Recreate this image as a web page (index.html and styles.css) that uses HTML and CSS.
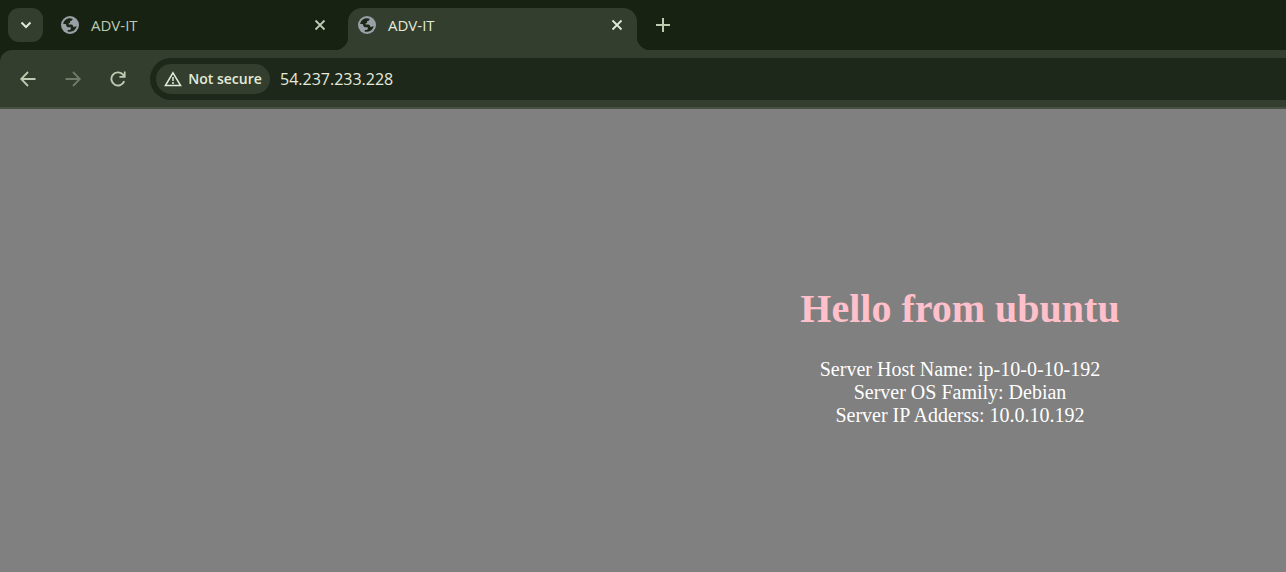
FILE: index.html
```html
<!DOCTYPE html>
<html lang="en">
<head>
<meta charset="utf-8">
<title>ADV-IT</title>
<link rel="stylesheet" href="styles.css">
</head>
<body>
<svg class="defs" aria-hidden="true">
  <symbol id="globe" viewBox="0 0 18 18">
    <circle cx="9" cy="9" r="9" fill="#9aa0a6"/>
    <path d="M2.200 8C2.600 4.700 5.400 2.200 8.800 2.200L11.600 2.700C11.600 4.200 10.600 4.900 9.200 5V6C9.200 6.900 8.600 7.300 7.600 7.300V8.400H10.200C11.500 8.400 12 9.200 12 10.200V10.800H14C15 10.800 15.400 10.400 15.800 9.600C15.300 13.200 12.500 15.800 9 15.800C8.200 15.800 7.400 15.700 6.700 15.400V13.900H8.400C9.400 13.900 9.800 13.300 9.800 12.500V11.300H7.600C6.300 11.300 5.500 10.500 5.300 9.200L4.600 8Z" fill="#1c2618"/>
  </symbol>
  <symbol id="close" viewBox="0 0 12 12">
    <path d="M1.500 1.500L10.500 10.500M10.500 1.500L1.500 10.500" fill="none" stroke="currentColor" stroke-width="1.800"/>
  </symbol>
</svg>
<div class="browser">
  <header class="tab-strip">
    <button class="tab-search" aria-label="Search tabs">
      <svg width="12" height="8" viewBox="0 0 12 8"><path d="M1.500 1.500L6 6L10.500 1.500" fill="none" stroke="currentColor" stroke-width="2"/></svg>
    </button>
    <div class="tab">
      <svg class="favicon"><use href="#globe"/></svg>
      <span class="tab-title">ADV-IT</span>
      <button class="tab-close" aria-label="Close tab"><svg width="12" height="12"><use href="#close"/></svg></button>
    </div>
    <div class="tab tab-active">
      <svg class="favicon"><use href="#globe"/></svg>
      <span class="tab-title">ADV-IT</span>
      <button class="tab-close" aria-label="Close tab"><svg width="12" height="12"><use href="#close"/></svg></button>
    </div>
    <button class="new-tab" aria-label="New tab">
      <svg width="14" height="14" viewBox="0 0 14 14"><path d="M7 0V14M0 7H14" fill="none" stroke="currentColor" stroke-width="2"/></svg>
    </button>
  </header>
  <div class="toolbar-back">
    <nav class="toolbar">
      <button class="nav-button" aria-label="Back"><svg width="16" height="16" viewBox="0 0 16 16"><path d="M15.500 8H1.500M8 1L1.200 8L8 15" fill="none" stroke="currentColor" stroke-width="1.800"/></svg></button>
      <button class="nav-button nav-dim" aria-label="Forward"><svg width="16" height="16" viewBox="0 0 16 16"><path d="M.5 8H14.500M8 1L14.800 8L8 15" fill="none" stroke="currentColor" stroke-width="1.800"/></svg></button>
      <button class="nav-button" aria-label="Reload"><svg width="16" height="16" viewBox="0 0 16 16"><path d="M14.200 10.200A6.600 6.600 0 1 1 12.800 3.400L14.200 5" fill="none" stroke="currentColor" stroke-width="1.900"/><path d="M15.600 .5V6.700H9.400V5H12.500L13.800 3.600V.5Z" fill="currentColor"/></svg></button>
      <div class="address-bar">
        <button class="security-chip">
          <svg width="18" height="16" viewBox="0 0 18 16"><path d="M9 1.800L16.600 14.600H1.400Z" fill="none" stroke="currentColor" stroke-width="1.500"/><path d="M9 6V10M9 11V13" fill="none" stroke="currentColor" stroke-width="1.500"/></svg>
          Not secure
        </button>
        <input class="address" type="text" aria-label="Address" value="54.237.233.228">
      </div>
    </nav>
  </div>
  <main class="page">
    <h1>Hello from ubuntu</h1>
    <p>Server Host Name: ip-10-0-10-192<br>Server OS Family: Debian<br>Server IP Adderss: 10.0.10.192</p>
  </main>
</div>
</body>
</html>
```
FILE: styles.css
```css
* { box-sizing: border-box; }

body {
  margin: 0;
  background: #808080;
  font-family: "Open Sans", "Noto Sans", sans-serif;
}

button {
  display: flex;
  align-items: center;
  justify-content: center;
  padding: 0;
  border: 0;
  background: none;
  color: inherit;
  font: inherit;
}

svg { flex: none; }
.defs { position: absolute; width: 0; height: 0; }

.browser {
  display: flex;
  flex-direction: column;
  min-height: 100vh;
  overflow: hidden;
}

.tab-strip {
  display: flex;
  height: 50px;
  padding: 8px 8px 0;
  background: #172213;
  color: #bdcbb3;
}

.tab-search {
  width: 35px;
  height: 34px;
  margin-right: 8px;
  border-radius: 11px;
  background: #333e2e;
  color: #e0e8d8;
}

.tab {
  position: relative;
  display: flex;
  align-items: center;
  gap: 12px;
  width: 289px;
  height: 42px;
  padding: 0 14px 8px 10px;
  font-size: 15px;
}

.tab + .tab { margin-left: 8px; }

.tab-active {
  border-radius: 14px 14px 0 0;
  background: #333e2e;
  color: #e3eadb;
}

/* Curved feet that join the active tab to the toolbar */
.tab-active::before,
.tab-active::after {
  content: "";
  position: absolute;
  bottom: 0;
  width: 14px;
  height: 14px;
}

.tab-active::before {
  right: 100%;
  background: radial-gradient(circle at 0 0, transparent 14px, #333e2e 15px);
}

.tab-active::after {
  left: 100%;
  background: radial-gradient(circle at 100% 0, transparent 14px, #333e2e 15px);
}

.favicon { width: 18px; height: 18px; }
.tab-title { flex: 1; }

.new-tab {
  width: 34px;
  height: 34px;
  margin-left: 9px;
}

.toolbar-back { background: #172213; }

.toolbar {
  display: flex;
  align-items: center;
  gap: 11px;
  height: 59px;
  padding: 0 0 0 11px;
  border-bottom: 2px solid #465041;
  border-radius: 12px 0 0 0;
  background: #333e2e;
  color: #bdcbb3;
}

.nav-button { width: 34px; height: 34px; }
.nav-dim { color: #707c69; }

.address-bar {
  display: flex;
  flex: 1;
  align-items: center;
  gap: 10px;
  height: 42px;
  margin-left: 4px;
  padding-left: 6px;
  border-radius: 21px 0 0 21px;
  background: #1e281a;
  color: #e3eadb;
}

.security-chip {
  gap: 6px;
  width: 114px;
  height: 30px;
  border-radius: 15px;
  background: #333e2e;
  font-size: 14px;
  font-weight: 600;
  white-space: nowrap;
}

.address {
  flex: 1;
  min-width: 0;
  padding: 0;
  border: 0;
  outline: 0;
  background: none;
  color: inherit;
  font: inherit;
  font-size: 16px;
}

.page {
  flex: 1;
  padding: 177px 0 0 634px;
  background: #808080;
  color: #fff;
  font-family: "Liberation Serif", "Times New Roman", serif;
  font-size: 20px;
  line-height: 23px;
  text-align: center;
}

.page h1 {
  margin: 0 0 26px;
  color: pink;
  font-size: 40px;
  line-height: 46px;
}

.page p { margin: 0; }
```
